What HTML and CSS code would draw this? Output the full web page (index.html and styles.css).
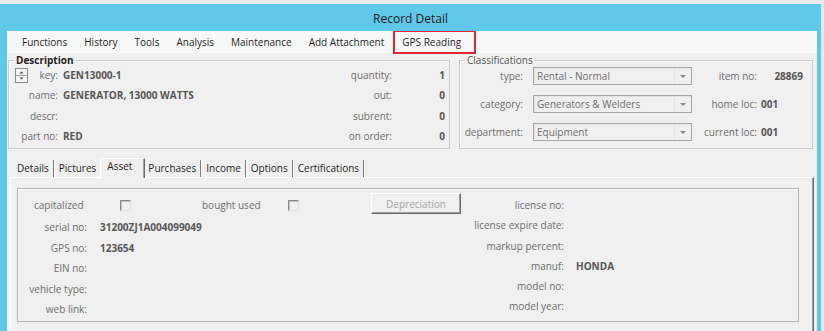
FILE: index.html
```html
<!DOCTYPE html>
<html lang="en">
<head>
    <meta charset="UTF-8">
    <meta name="viewport" content="width=device-width, initial-scale=1.0">
    <title>Record Detail</title>
    <link rel="stylesheet" href="styles.css">
</head>
<body>
    <div class="window">
        <div class="titlebar">Record Detail</div>

        <div class="client">
            <div class="menubar">
                <span class="menu-item">Functions</span>
                <span class="menu-item">History</span>
                <span class="menu-item">Tools</span>
                <span class="menu-item">Analysis</span>
                <span class="menu-item">Maintenance</span>
                <span class="menu-item">Add Attachment</span>
                <span class="menu-item highlighted">GPS Reading</span>
            </div>

            <div class="top-area">
                <fieldset class="group description">
                    <legend>Description</legend>
                    <div class="desc-grid">
                        <div class="lbl key-lbl">
                            <svg class="spinner" width="13" height="15" viewBox="0 0 13 15">
                                <rect x="0.5" y="0.5" width="12" height="14" fill="#f4f4f4" stroke="#8c8c8c"/>
                                <line x1="1" y1="7.5" x2="12" y2="7.5" stroke="#9a9a9a"/>
                                <path d="M4.5 5.5h4L6.5 3.5z" fill="#3c3c3c"/>
                                <path d="M4.5 9.5h4l-2 2z" fill="#3c3c3c"/>
                            </svg>
                            <span>key:</span>
                        </div>
                        <div class="val">GEN13000-1</div>
                        <div class="lbl">quantity:</div>
                        <div class="val num">1</div>

                        <div class="lbl">name:</div>
                        <div class="val">GENERATOR, 13000 WATTS</div>
                        <div class="lbl">out:</div>
                        <div class="val num">0</div>

                        <div class="lbl">descr:</div>
                        <div class="val"></div>
                        <div class="lbl">subrent:</div>
                        <div class="val num">0</div>

                        <div class="lbl">part no:</div>
                        <div class="val">RED</div>
                        <div class="lbl">on order:</div>
                        <div class="val num">0</div>
                    </div>
                </fieldset>

                <fieldset class="group classifications">
                    <legend>Classifications</legend>
                    <div class="class-grid">
                        <div class="lbl">type:</div>
                        <div class="combo-cell">
                            <div class="combo"><span class="combo-text">Rental - Normal</span><span class="combo-btn"></span></div>
                        </div>
                        <div class="lbl">item no:</div>
                        <div class="val num item-no">28869</div>

                        <div class="lbl">category:</div>
                        <div class="combo-cell">
                            <div class="combo"><span class="combo-text">Generators &amp; Welders</span><span class="combo-btn"></span></div>
                        </div>
                        <div class="lbl">home loc:</div>
                        <div class="val loc">001</div>

                        <div class="lbl">department:</div>
                        <div class="combo-cell">
                            <div class="combo"><span class="combo-text">Equipment</span><span class="combo-btn"></span></div>
                        </div>
                        <div class="lbl">current loc:</div>
                        <div class="val loc">001</div>
                    </div>
                </fieldset>
            </div>

            <div class="tabs">
                <span class="tab first">Details</span>
                <span class="tab before-active">Pictures</span>
                <span class="tab active">Asset</span>
                <span class="tab after-active">Purchases</span>
                <span class="tab">Income</span>
                <span class="tab">Options</span>
                <span class="tab">Certifications</span>
            </div>

            <div class="tab-panel">
                <div class="asset-group">
                    <div class="asset-left">
                        <div class="check-row">
                            <span class="check-label">capitalized</span>
                            <span class="checkbox"></span>
                            <span class="check-label bought">bought used</span>
                            <span class="checkbox"></span>
                            <button class="win-button" disabled>Depreciation</button>
                        </div>
                        <div class="field-row"><span class="lbl">serial no:</span><span class="val">31200ZJ1A004099049</span></div>
                        <div class="field-row"><span class="lbl">GPS no:</span><span class="val">123654</span></div>
                        <div class="field-row"><span class="lbl">EIN no:</span><span class="val"></span></div>
                        <div class="field-row"><span class="lbl">vehicle type:</span><span class="val"></span></div>
                        <div class="field-row"><span class="lbl">web link:</span><span class="val"></span></div>
                    </div>
                    <div class="asset-right">
                        <div class="field-row"><span class="lbl">license no:</span><span class="val"></span></div>
                        <div class="field-row"><span class="lbl">license expire date:</span><span class="val"></span></div>
                        <div class="field-row"><span class="lbl">markup percent:</span><span class="val"></span></div>
                        <div class="field-row"><span class="lbl">manuf:</span><span class="val">HONDA</span></div>
                        <div class="field-row"><span class="lbl">model no:</span><span class="val"></span></div>
                        <div class="field-row"><span class="lbl">model year:</span><span class="val"></span></div>
                    </div>
                </div>
            </div>
        </div>
    </div>
</body>
</html>
```

FILE: styles.css
```css
body {
    margin: 0;
    font-family: "Open Sans", "Noto Sans", sans-serif;
    font-size: 10px;
    background-color: #f0f0f0;
}
.window {
    width: 824px;
    height: 331px;
    box-sizing: border-box;
    background-color: #60c8e9;
    border-top: 4px solid #ececec;
    border-right: 3px solid #e8e8e8;
    display: flex;
    flex-direction: column;
    overflow: hidden;
}
.titlebar {
    height: 27px;
    box-sizing: border-box;
    padding-top: 4px;
    line-height: 22px;
    text-align: center;
    font-size: 12px;
    color: #1a1a1a;
}
.client {
    flex: 1;
    margin-left: 7px;
    width: 810px;
    background-color: #f0f0f0;
    display: flex;
    flex-direction: column;
    overflow: hidden;
}

/* menu */
.menubar {
    height: 22px;
    flex-shrink: 0;
    background-color: #f8f8f8;
    display: flex;
    align-items: center;
    padding-left: 7px;
    gap: 1px;
    font-size: 10px;
    color: #1f1f1f;
}
.menu-item {
    padding: 0 8px;
    line-height: 22px;
}
.menu-item.highlighted {
    height: 24px;
    box-sizing: border-box;
    line-height: 20px;
    border: 2px solid #e3262b;
    padding: 0 13px 0 7px;
}

/* group boxes */
.top-area {
    display: flex;
    gap: 9px;
    padding: 0 4px 0 1px;
}
.group {
    margin: 0;
    padding: 0;
    border: 1px solid #cbcbcb;
    box-shadow: inset 1px 1px 0 #fafafa;
    min-width: 0;
}
.group legend {
    padding: 0 2px;
    margin-left: 5px;
    line-height: 14px;
    font-size: 10px;
}
.description {
    width: 442px;
    box-sizing: border-box;
    padding-bottom: 2px;
}
.description legend {
    font-weight: bold;
    color: #1e1e1e;
}
.classifications {
    width: 354px;
    box-sizing: border-box;
    padding-bottom: 2px;
}
.classifications legend {
    color: #505050;
}

.lbl {
    color: #6d6d6d;
    text-align: right;
    white-space: nowrap;
}
.val {
    color: #555;
    font-weight: bold;
    white-space: nowrap;
}
.num {
    text-align: right;
}

.desc-grid {
    display: grid;
    grid-template-columns: 49px 264px 60px 48px;
    grid-auto-rows: 20.3px;
    column-gap: 5px;
    align-items: center;
    margin-top: -2px;
    padding-right: 4px;
}
.key-lbl {
    display: flex;
    justify-content: space-between;
    align-items: center;
    padding-left: 6px;
}
.spinner {
    display: block;
}

.class-grid {
    display: grid;
    grid-template-columns: 63px 169px 65px 1fr;
    grid-auto-rows: 28px;
    align-items: center;
    margin-top: -5px;
}
.combo-cell {
    padding-left: 10px;
}
.combo {
    height: 18px;
    box-sizing: border-box;
    border: 1px solid #a6a6a6;
    box-shadow: inset 1px 1px 0 #e2e2e2;
    background-color: #f0f0f0;
    display: flex;
    align-items: center;
}
.combo-text {
    flex: 1;
    padding-left: 3px;
    color: #6d6d6d;
}
.combo-btn {
    width: 16px;
    height: 14px;
    margin-right: 1px;
    box-sizing: border-box;
    border-left: 1px solid #e4e4e4;
    display: flex;
    align-items: center;
    justify-content: center;
}
.combo-btn::after {
    content: "";
    border-left: 3px solid transparent;
    border-right: 3px solid transparent;
    border-top: 3px solid #8a8a8a;
}
.item-no {
    padding-right: 9px;
}
.loc {
    padding-left: 4px;
}

/* tabs */
.tabs {
    display: flex;
    align-items: flex-end;
    height: 19px;
    margin: 9px 0 0 3px;
    flex-shrink: 0;
    color: #1e1e1e;
}
.tab {
    height: 17px;
    line-height: 17px;
    padding: 0 4px 0 5px;
    border-right: 1px solid #7a7a7a;
    box-shadow: 1px 0 0 #fff;
}
.tab.first {
    padding-left: 7px;
}
.tab.before-active {
    border-right: none;
    box-shadow: none;
    padding-right: 4px;
}
.tab.active {
    position: relative;
    z-index: 1;
    height: 20px;
    margin-bottom: -1px;
    box-sizing: border-box;
    line-height: 15px;
    padding: 0 12px 0 6px;
    background-color: #f0f0f0;
    border-left: 1px solid #fff;
    border-top: 1px solid #fff;
    border-right: 1px solid #696969;
    box-shadow: inset -1px 0 0 #a0a0a0;
}
.tab.after-active {
    padding-left: 3px;
}

.tab-panel {
    flex: 1;
    width: 804px;
    margin-left: 3px;
    box-sizing: border-box;
    border-top: 1px solid #fff;
    border-left: 1px solid #fff;
    border-right: 1px solid #696969;
    box-shadow: inset -1px 0 0 #a0a0a0;
    padding: 10px 0 0 6px;
}
.asset-group {
    width: 782px;
    height: 134px;
    box-sizing: border-box;
    border: 1px solid #b4b4b4;
    box-shadow: inset 1px 1px 0 #fafafa;
    display: flex;
    align-items: flex-start;
}
.asset-left {
    width: 455px;
    padding-top: 4px;
}
.check-row {
    height: 24px;
    display: flex;
    align-items: center;
    padding-left: 16px;
}
.check-label {
    width: 86px;
    color: #6d6d6d;
}
.check-label.bought {
    margin-left: 71px;
}
.checkbox {
    width: 11px;
    height: 11px;
    box-sizing: border-box;
    border: 1px solid;
    border-color: #8a8a8a #e4e4e4 #e4e4e4 #8a8a8a;
    box-shadow: inset 1px 1px 0 #c4c4c4;
    background-color: #f0f0f0;
}
.win-button {
    align-self: flex-start;
    margin-left: 72px;
    width: 90px;
    height: 21px;
    padding: 0;
    font-family: inherit;
    font-size: 10px;
    color: #a3a3a3;
    background-color: #f0f0f0;
    border: 1px solid;
    border-color: #fff #6a6a6a #6a6a6a #fff;
    box-shadow: inset -1px -1px 0 #a0a0a0;
}
.field-row {
    display: flex;
    align-items: center;
    height: 20.5px;
}
.asset-left .lbl {
    width: 69px;
}
.asset-left .val {
    margin-left: 13px;
}
.asset-right {
    padding-top: 6px;
}
.asset-right .field-row {
    height: 20.2px;
}
.asset-right .lbl {
    width: 91px;
}
.asset-right .val {
    margin-left: 12px;
}
```
